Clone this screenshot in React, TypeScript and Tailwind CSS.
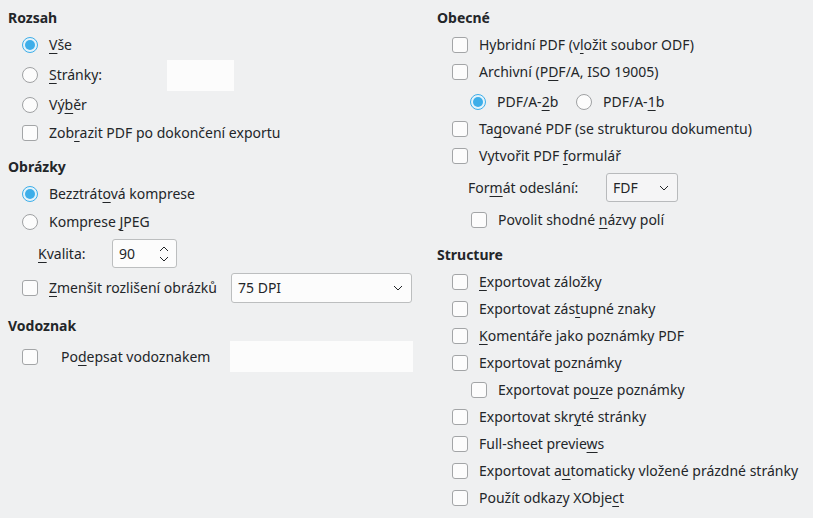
import React from 'react';

const font = { fontFamily: '"Noto Sans", sans-serif' };

// label with one underlined mnemonic letter: [before, key, after]
function Label({ t }: { t: [string, string, string] }) {
  return (
    <span className="whitespace-nowrap">
      {t[0]}
      <span className="underline underline-offset-[3px] decoration-1">{t[1]}</span>
      {t[2]}
    </span>
  );
}

function Check() {
  return <span className="block w-4 h-4 shrink-0 rounded-[3px] border border-[#a3a5a7] bg-[#fcfcfc]" />;
}

function Radio({ on }: { on?: boolean }) {
  return on ? (
    <span className="flex w-4 h-4 shrink-0 items-center justify-center rounded-full border border-[#3daee9] bg-[#e4f3fb]">
      <span className="block w-[10px] h-[10px] rounded-full bg-[#3daee9]" />
    </span>
  ) : (
    <span className="block w-4 h-4 shrink-0 rounded-full border border-[#9fa1a3] bg-[#fcfcfc]" />
  );
}

function Heading({ children, mt }: { children: React.ReactNode; mt: string }) {
  return <div className={`h-5 flex items-center font-bold ${mt}`}>{children}</div>;
}

function Chevron() {
  return (
    <svg width="10" height="6" viewBox="0 0 10 6" className="shrink-0">
      <path d="M1 1l4 4 4-4" fill="none" stroke="#232629" strokeWidth="1" />
    </svg>
  );
}

function LeftColumn() {
  return (
    <div className="w-[405px] shrink-0 flex flex-col">
      <Heading mt="mt-0">Rozsah</Heading>
      <div className="h-7 mt-[3px] pl-[14px] flex items-center gap-[11px]">
        <Radio on />
        <Label t={['', 'V', 'še']} />
      </div>
      <div className="h-7 mt-[2px] pl-[14px] flex items-center gap-[11px]">
        <Radio />
        <span className="w-[107px]"><Label t={['', 'S', 'tránky:']} /></span>
        <span className="block w-[67px] h-[31px] bg-[#fcfcfc]" />
      </div>
      <div className="h-7 mt-[2px] pl-[14px] flex items-center gap-[11px]">
        <Radio />
        <Label t={['Vý', 'b', 'ěr']} />
      </div>
      <div className="h-7 pl-[14px] flex items-center gap-[11px]">
        <Check />
        <Label t={['Zob', 'r', 'azit PDF po dokončení exportu']} />
      </div>

      <Heading mt="mt-[10px]">Obrázky</Heading>
      <div className="h-7 mt-[3px] pl-[14px] flex items-center gap-[11px]">
        <Radio on />
        <Label t={['Bezztrát', 'o', 'vá komprese']} />
      </div>
      <div className="h-7 pl-[14px] flex items-center gap-[11px]">
        <Radio />
        <Label t={['Komprese ', 'J', 'PEG']} />
      </div>
      <div className="h-[29px] mt-[3px] pl-[30px] flex items-center">
        <span className="w-[74px]"><Label t={['', 'K', 'valita:']} /></span>
        <div className="w-[65px] h-[29px] rounded-[3px] border border-[#bcbebf] bg-[#fcfcfc] flex items-center pl-[6px] pr-[6px]">
          <span className="flex-1">90</span>
          <svg width="12" height="20" viewBox="0 0 12 20">
            <path d="M2 7l4-4 4 4M2 13l4 4 4-4" fill="none" stroke="#232629" strokeWidth="1" />
          </svg>
        </div>
      </div>
      <div className="h-[30px] mt-[5px] pl-[14px] flex items-center">
        <Check />
        <span className="ml-[11px] w-[182px]"><Label t={['', 'Z', 'menšit rozlišení obrázků']} /></span>
        <div className="w-[181px] h-[30px] rounded-[3px] border border-[#bcbebf] bg-[#fcfcfc] flex items-center pl-[6px] pr-[8px]">
          <span className="flex-1">75 DPI</span>
          <Chevron />
        </div>
      </div>

      <Heading mt="mt-[13px]">Vodoznak</Heading>
      <div className="h-[31px] mt-[5px] pl-[14px] flex items-center">
        <Check />
        <span className="ml-[23px] w-[169px]"><Label t={['Po', 'd', 'epsat vodoznakem']} /></span>
        <span className="block w-[183px] h-[31px] bg-[#fcfcfc]" />
      </div>
    </div>
  );
}

function Row({ t, indent = 'pl-[15px]', mt = 'mt-0' }: { t: [string, string, string]; indent?: string; mt?: string }) {
  return (
    <div className={`h-[27px] flex items-center gap-[11px] ${indent} ${mt}`}>
      <Check />
      <Label t={t} />
    </div>
  );
}

function RightColumn() {
  return (
    <div className="flex flex-col">
      <Heading mt="mt-0">Obecné</Heading>
      <Row mt="mt-[3px]" t={['Hybridní PDF (v', 'l', 'ožit soubor ODF)']} />
      <Row t={['Archivní (P', 'D', 'F/A, ISO 19005)']} />
      <div className="h-[27px] mt-[3.5px] pl-[33px] flex items-center">
        <Radio on />
        <span className="ml-[11px] w-[79px]"><Label t={['PDF/A-', '2', 'b']} /></span>
        <Radio />
        <span className="ml-[11px]"><Label t={['PDF/A-', '1', 'b']} /></span>
      </div>
      <Row t={['Ta', 'g', 'ované PDF (se strukturou dokumentu)']} />
      <Row t={['Vytvořit PDF ', 'f', 'ormulář']} />
      <div className="h-[29px] mt-[3.5px] pl-[31px] flex items-center">
        <span className="w-[138px]"><Label t={['For', 'm', 'át odeslání:']} /></span>
        <div className="w-[72px] h-[29px] rounded-[3px] border border-[#b8babc] bg-[#f5f5f6] flex items-center pl-[6px] pr-[8px]">
          <span className="flex-1">FDF</span>
          <Chevron />
        </div>
      </div>
      <Row mt="mt-[4.5px]" indent="pl-[34px]" t={['Povolit shodné ', 'n', 'ázvy polí']} />

      <Heading mt="mt-[11.5px]">Structure</Heading>
      <Row mt="mt-[3px]" t={['', 'E', 'xportovat záložky']} />
      <Row t={['Exportovat zás', 't', 'upné znaky']} />
      <Row t={['', 'K', 'omentáře jako poznámky PDF']} />
      <Row t={['Exportovat ', 'p', 'oznámky']} />
      <Row indent="pl-[34px]" t={['Exportovat po', 'u', 'ze poznámky']} />
      <Row t={['Exportovat skr', 'y', 'té stránky']} />
      <Row t={['Full-sheet previe', 'w', 's']} />
      <Row t={['Exportovat a', 'u', 'tomaticky vložené prázdné stránky']} />
      <Row t={['Použít odkazy XObje', 'c', 't']} />
    </div>
  );
}

export default function App() {
  return (
    <div
      className="w-[813px] h-[518px] overflow-hidden bg-[#eff0f1] text-[#232629] text-[14px] leading-[20px] flex gap-[24px] pl-[8px] pt-[8px]"
      style={font}
    >
      <LeftColumn />
      <RightColumn />
    </div>
  );
}
